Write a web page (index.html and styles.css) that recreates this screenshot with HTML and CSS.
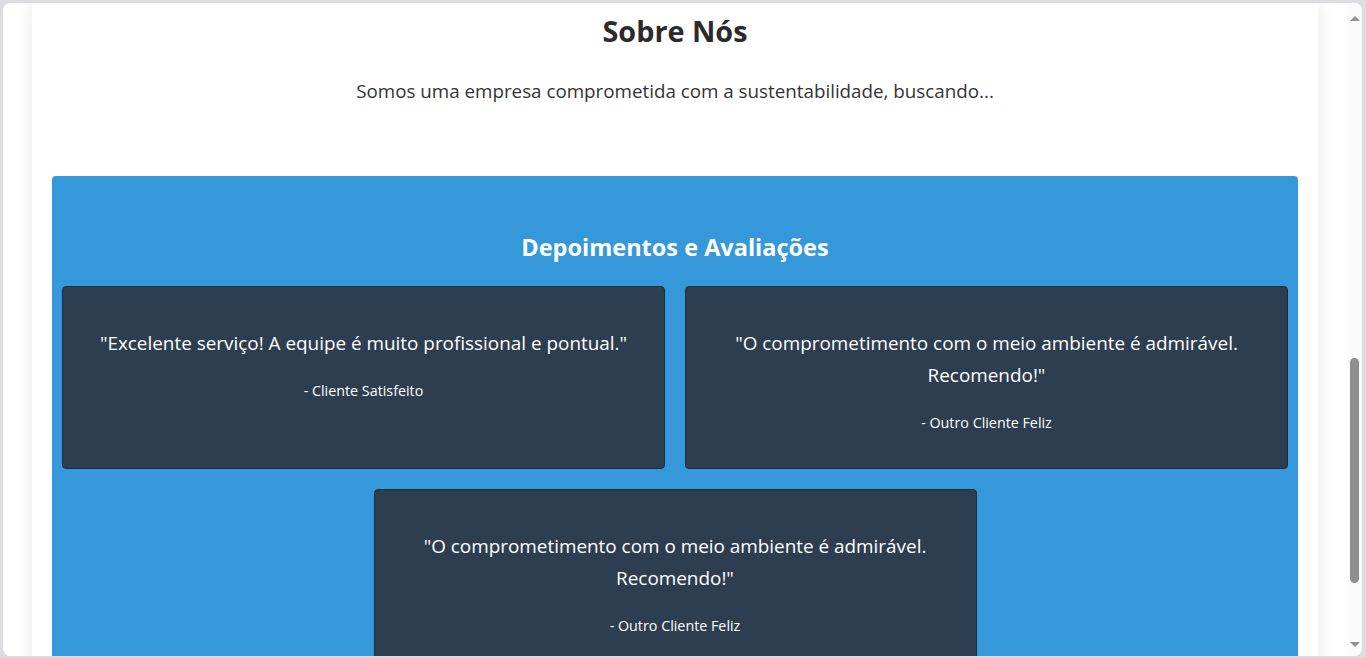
FILE: index.html
```html
<!DOCTYPE html>
<html lang="pt-BR">
<head>
<meta charset="utf-8">
<title>Sobre Nós</title>
<link rel="stylesheet" href="styles.css">
</head>
<body>
<div class="frame">
  <div class="window">
    <div class="viewport">
      <main class="container">
        <section class="about">
          <h2 class="about-title">Sobre Nós</h2>
          <p class="about-text">Somos uma empresa comprometida com a sustentabilidade, buscando...</p>
        </section>
        <section class="testimonials">
          <h2 class="testimonials-title">Depoimentos e Avaliações</h2>
          <div class="cards">
            <article class="card">
              <p class="quote">"Excelente serviço! A equipe é muito profissional e pontual."</p>
              <p class="author">- Cliente Satisfeito</p>
            </article>
            <article class="card">
              <p class="quote">"O comprometimento com o meio ambiente é admirável. Recomendo!"</p>
              <p class="author">- Outro Cliente Feliz</p>
            </article>
            <article class="card">
              <p class="quote">"O comprometimento com o meio ambiente é admirável. Recomendo!"</p>
              <p class="author">- Outro Cliente Feliz</p>
            </article>
          </div>
        </section>
      </main>
    </div>
    <div class="scrollbar">
      <span class="arrow arrow-up"></span>
      <div class="track"><div class="thumb" style="top: 333px; height: 225px;"></div></div>
      <span class="arrow arrow-down"></span>
    </div>
  </div>
</div>
</body>
</html>
```

FILE: styles.css
```css
html, body {
  margin: 0;
  height: 100%;
}
body {
  background: #dcdde1;
  font-family: "Open Sans", "Noto Sans", sans-serif;
  color: #333;
}
.frame {
  height: 100vh;
  box-sizing: border-box;
  padding: 3px 4px 2px 3px;
}
.window {
  height: 100%;
  display: flex;
  background: #fff;
  border-radius: 8px;
  overflow: hidden;
}
.viewport {
  flex: 1;
  overflow: hidden;
  background: #fff;
}
.container {
  margin: 0 29px;
  padding: 9px 20px 0;
  background: #fff;
  box-shadow: 0 0 18px rgba(0, 0, 0, 0.09);
  min-height: 800px;
}
.about {
  text-align: center;
}
.about-title {
  margin: 0;
  font-size: 28.8px;
  line-height: 38px;
  font-weight: 700;
  color: #2b2b2b;
}
.about-text {
  margin: 26px 0 0;
  font-size: 18.8px;
  line-height: 31px;
  color: #333;
}
.testimonials {
  margin-top: 69px;
  background: #3498db;
  border-radius: 4px;
  padding: 32px 10px 40px;
  text-align: center;
}
.testimonials-title {
  margin: 20px 0 20px;
  font-size: 23.5px;
  line-height: 38px;
  font-weight: 700;
  color: #fff;
}
.cards {
  display: flex;
  flex-wrap: wrap;
  justify-content: center;
  gap: 20px 20px;
}
.card {
  box-sizing: border-box;
  flex: 0 0 calc(50% - 10px);
  background: #2c3e50;
  border: 1px solid #1f2d3b;
  border-radius: 4px;
  padding: 20px 20px 15px;
  color: #fff;
}
.quote {
  margin: 20px 0 20px;
  font-size: 18.9px;
  line-height: 32px;
}
.author {
  margin: 0 0 18px;
  font-size: 14.3px;
  line-height: 24px;
}
.scrollbar {
  width: 15px;
  display: flex;
  flex-direction: column;
  align-items: center;
  background: #fbfbfb;
}
.arrow {
  width: 0;
  height: 0;
  border-left: 5px solid transparent;
  border-right: 5px solid transparent;
}
.arrow-up {
  margin: 13px 0 4px;
  border-bottom: 5px solid #909090;
}
.arrow-down {
  margin: 4px 0 9px;
  border-top: 5px solid #909090;
}
.track {
  flex: 1;
  width: 100%;
  position: relative;
}
.thumb {
  position: absolute;
  left: 3px;
  width: 9px;
  background: #8f8f8f;
  border-radius: 5px;
}
```
